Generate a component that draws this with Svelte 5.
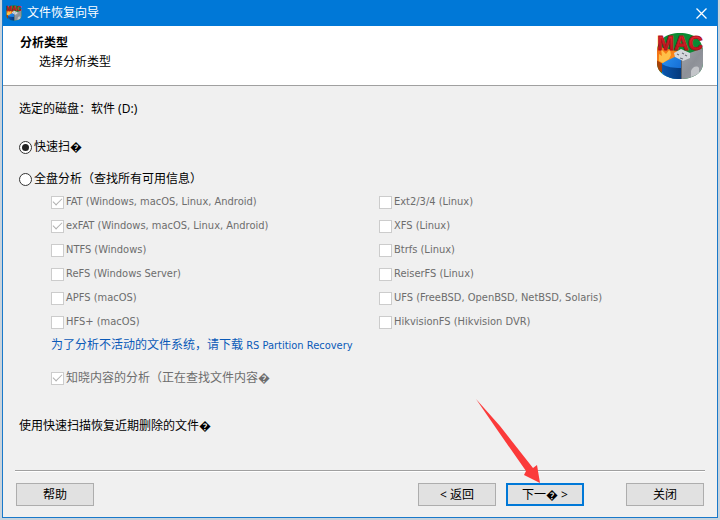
<script lang="ts">
  type Option = { name: string; checked: boolean };

  let mode = $state('quick');

  // Two columns of file systems, top to bottom
  const columns: Option[][] = [
    [
      { name: 'FAT (Windows, macOS, Linux, Android)', checked: true },
      { name: 'exFAT (Windows, macOS, Linux, Android)', checked: true },
      { name: 'NTFS (Windows)', checked: false },
      { name: 'ReFS (Windows Server)', checked: false },
      { name: 'APFS (macOS)', checked: false },
      { name: 'HFS+ (macOS)', checked: false }
    ],
    [
      { name: 'Ext2/3/4 (Linux)', checked: false },
      { name: 'XFS (Linux)', checked: false },
      { name: 'Btrfs (Linux)', checked: false },
      { name: 'ReiserFS (Linux)', checked: false },
      { name: 'UFS (FreeBSD, OpenBSD, NetBSD, Solaris)', checked: false },
      { name: 'HikvisionFS (Hikvision DVR)', checked: false }
    ]
  ];
</script>

{#snippet logo(id: string)}
  <svg class="logo" viewBox="0 0 48 48" aria-hidden="true">
    <defs>
      <linearGradient id="{id}-red" x1="0" y1="0" x2="0" y2="1">
        <stop offset="0" stop-color="#ee3037" />
        <stop offset="1" stop-color="#b80d18" />
      </linearGradient>
      <linearGradient id="{id}-blue" x1="0" y1="0" x2="1" y2="1">
        <stop offset="0" stop-color="#2a94f2" />
        <stop offset="1" stop-color="#0f62cc" />
      </linearGradient>
      <linearGradient id="{id}-side" x1="0" y1="0" x2="1" y2="0">
        <stop offset="0" stop-color="#0b56ad" />
        <stop offset="1" stop-color="#053a7c" />
      </linearGradient>
      <linearGradient id="{id}-grey" x1="0" y1="0" x2="1" y2="1">
        <stop offset="0" stop-color="#a2a5ab" />
        <stop offset="0.5" stop-color="#8d9097" />
        <stop offset="1" stop-color="#9c9fa6" />
      </linearGradient>
      <linearGradient id="{id}-orange" x1="0" y1="0" x2="1" y2="1">
        <stop offset="0" stop-color="#f06a12" />
        <stop offset="1" stop-color="#ff9a1e" />
      </linearGradient>
      <clipPath id="{id}-disc">
        <path d="M1 20C1 8 10 1 24 1s23 7 23 19v11c0 10-10 16-23 16S1 41 1 31z" />
      </clipPath>
    </defs>
    <g clip-path="url(#{id}-disc)">
      <rect width="48" height="48" fill="#0b8b34" />
      <path d="M0 14L28 21 7 32 0 30z" fill="url(#{id}-orange)" />
      <path d="M0 28l7 4v9L0 37z" fill="#a84108" />
      <path d="M6 31L25 22v26H6z" fill="url(#{id}-blue)" />
      <path d="M6 32c5 3 11 4 19 4v12C16 48 9 45 6 40z" fill="url(#{id}-side)" />
      <path d="M25 24L48 16v32H25z" fill="url(#{id}-grey)" />
      <path d="M25 24h1v24h-1z" fill="#5f636b" />
      <path d="M35 45v-6c1-4 6-6 8-3v6z" fill="#c3c5c9" />
      <path d="M18 21l7-4 9 4v5l-7 3-8-4z" fill="#d5d7dc" />
      <path d="M21 22l2 1m3-2l2 1m-4 4l3 1m2-4l2 1" stroke="#6b6f78" stroke-width="1.2" />
      <path d="M3 29l0-7 3 2-1-7 5 5 4-5 1 6-2 4-6 4z" fill="#ffbf48" />
    </g>
    <text
      x="24"
      y="18"
      text-anchor="middle"
      font-size="20"
      fill="url(#{id}-red)"
      stroke="#b0101b"
      stroke-width="1">MAC</text
    >
  </svg>
{/snippet}

<div class="desktop">
  <div class="window">
    <header class="titlebar">
      <span class="app-icon">{@render logo('small')}</span>
      <span class="caption">文件恢复向导</span>
      <button class="close" aria-label="关闭窗口">
        <svg width="11" height="11" viewBox="0 0 11 11" fill="none" stroke="currentColor" stroke-width="1.3">
          <path d="M.5.5l10 10M10.5.5l-10 10" />
        </svg>
      </button>
    </header>

    <section class="banner">
      <div>
        <h1>分析类型</h1>
        <p>选择分析类型</p>
      </div>
      <span class="banner-icon">{@render logo('large')}</span>
    </section>

    <main>
      <p class="disk">选定的磁盘：软件 (D:)</p>

      <label class="choice">
        <input type="radio" name="mode" value="quick" bind:group={mode} />
        快速扫�
      </label>
      <label class="choice">
        <input type="radio" name="mode" value="full" bind:group={mode} />
        全盘分析（查找所有可用信息）
      </label>

      <div class="details">
        <div class="columns">
          {#each columns as column}
            <div>
              {#each column as fs}
                <label class="option latin">
                  <input type="checkbox" checked={fs.checked} disabled />
                  {fs.name}
                </label>
              {/each}
            </div>
          {/each}
        </div>

        <a href="#download">为了分析不活动的文件系统，请下载 <span class="latin">RS Partition Recovery</span></a>

        <label class="option content-aware">
          <input type="checkbox" checked disabled />
          知晓内容的分析（正在查找文件内容�
        </label>
      </div>

      <p class="hint">使用快速扫描恢复近期删除的文件�</p>
    </main>

    <footer>
      <button class="btn">帮助</button>
      <div class="nav">
        <button class="btn">&lt; 返回</button>
        <div class="next">
          <button class="btn primary">下一� &gt;</button>
          <svg class="arrow" width="66" height="84" viewBox="0 0 66 84" aria-hidden="true">
            <path d="M0 0L24 27 57 69l4-3 3 18-16-8 2-4L22 32z" fill="#fb3a3a" />
          </svg>
        </div>
      </div>
      <button class="btn">关闭</button>
    </footer>
  </div>
</div>

<style>
  :global(body) {
    margin: 0;
    background: #c9d3dc;
  }

  .desktop {
    box-sizing: border-box;
    min-height: 100vh;
    padding: 0 2px 2px;
    display: flex;
    font-family: "Noto Sans", "Noto Sans CJK SC", sans-serif;
    font-size: 12px;
    line-height: 16px;
    color: #000;
  }

  .window {
    flex: 1;
    display: flex;
    flex-direction: column;
    background: #f0f0f0;
    border: 1px solid #1979ca;
    border-top: 0;
  }

  h1,
  p {
    margin: 0;
    font-size: 12px;
  }

  .logo {
    display: block;
    width: 100%;
    height: 100%;
    overflow: visible;
    font-family: "Liberation Sans", sans-serif;
    font-weight: 700;
  }

  .latin {
    font-family: "DejaVu Sans Condensed", "DejaVu Sans", sans-serif;
    font-size: 11px;
  }

  .titlebar {
    display: flex;
    align-items: center;
    gap: 5px;
    height: 26px;
    padding: 0 10px 0 3px;
    background: #0078d7;
    color: #fff;
  }
  .app-icon { width: 16px; height: 16px; }
  .caption { flex: 1; }

  .close {
    display: flex;
    padding: 0;
    background: none;
    border: 0;
    color: #fff;
  }

  .banner {
    display: flex;
    justify-content: space-between;
    padding: 6px 13px 5px 17px;
    background: #fff;
    border-bottom: 1px solid #a0a0a0;
  }
  .banner h1 { padding-top: 3px; }
  .banner p { padding: 3px 0 0 19px; }
  .banner-icon { width: 48px; height: 48px; }

  main {
    flex: 1;
    margin: 0 12px;
    padding: 15px 4px 0;
    border-bottom: 1px solid #a0a0a0;
    box-shadow: 0 1px #fff;
  }

  .disk { margin-bottom: 22px; }

  .choice,
  .option {
    display: flex;
    align-items: center;
    gap: 2px;
    height: 16px;
  }
  .choice { margin-bottom: 16px; }

  input {
    appearance: none;
    box-sizing: border-box;
    display: grid;
    place-items: center;
    flex: none;
    width: 13px;
    height: 13px;
    margin: 0;
    background: #fff;
    border: 1px solid #ccc;
  }

  input[type="radio"] {
    border-color: #333;
    border-radius: 50%;
  }
  input[type="radio"]:checked::after {
    content: "";
    width: 7px;
    height: 7px;
    border-radius: 50%;
    background: #222;
  }

  input[type="checkbox"]:checked::after {
    content: "";
    width: 8px;
    height: 4px;
    margin-bottom: 3px;
    border: solid #b0b0b0;
    border-width: 0 0 1px 1px;
    transform: rotate(-45deg);
  }

  .details { padding-left: 32px; }

  .columns {
    display: grid;
    grid-template-columns: 328px 1fr;
    margin-top: -13px;
  }

  .option {
    height: 24px;
    color: #6d6d6d;
  }

  a {
    display: block;
    padding-top: 3px;
    color: #0a5ab8;
    text-decoration: none;
  }

  .content-aware { margin-top: 12px; }
  .hint { margin-top: 28px; }

  footer {
    display: flex;
    align-items: center;
    gap: 42px;
    padding: 12px 13px 11px;
  }

  .nav {
    display: flex;
    gap: 10px;
    margin-left: auto;
  }
  .next { position: relative; }

  .btn {
    box-sizing: border-box;
    width: 78px;
    height: 23px;
    padding: 0;
    background: #e1e1e1;
    border: 1px solid #adadad;
    color: #000;
    font: inherit;
    line-height: 16px;
  }
  .btn:hover { background: #e5f1fb; }
  .primary { border: 2px solid #0078d7; }

  /* Points at the button from the upper left */
  .arrow {
    position: absolute;
    right: 42px;
    bottom: 100%;
    pointer-events: none;
  }
</style>
